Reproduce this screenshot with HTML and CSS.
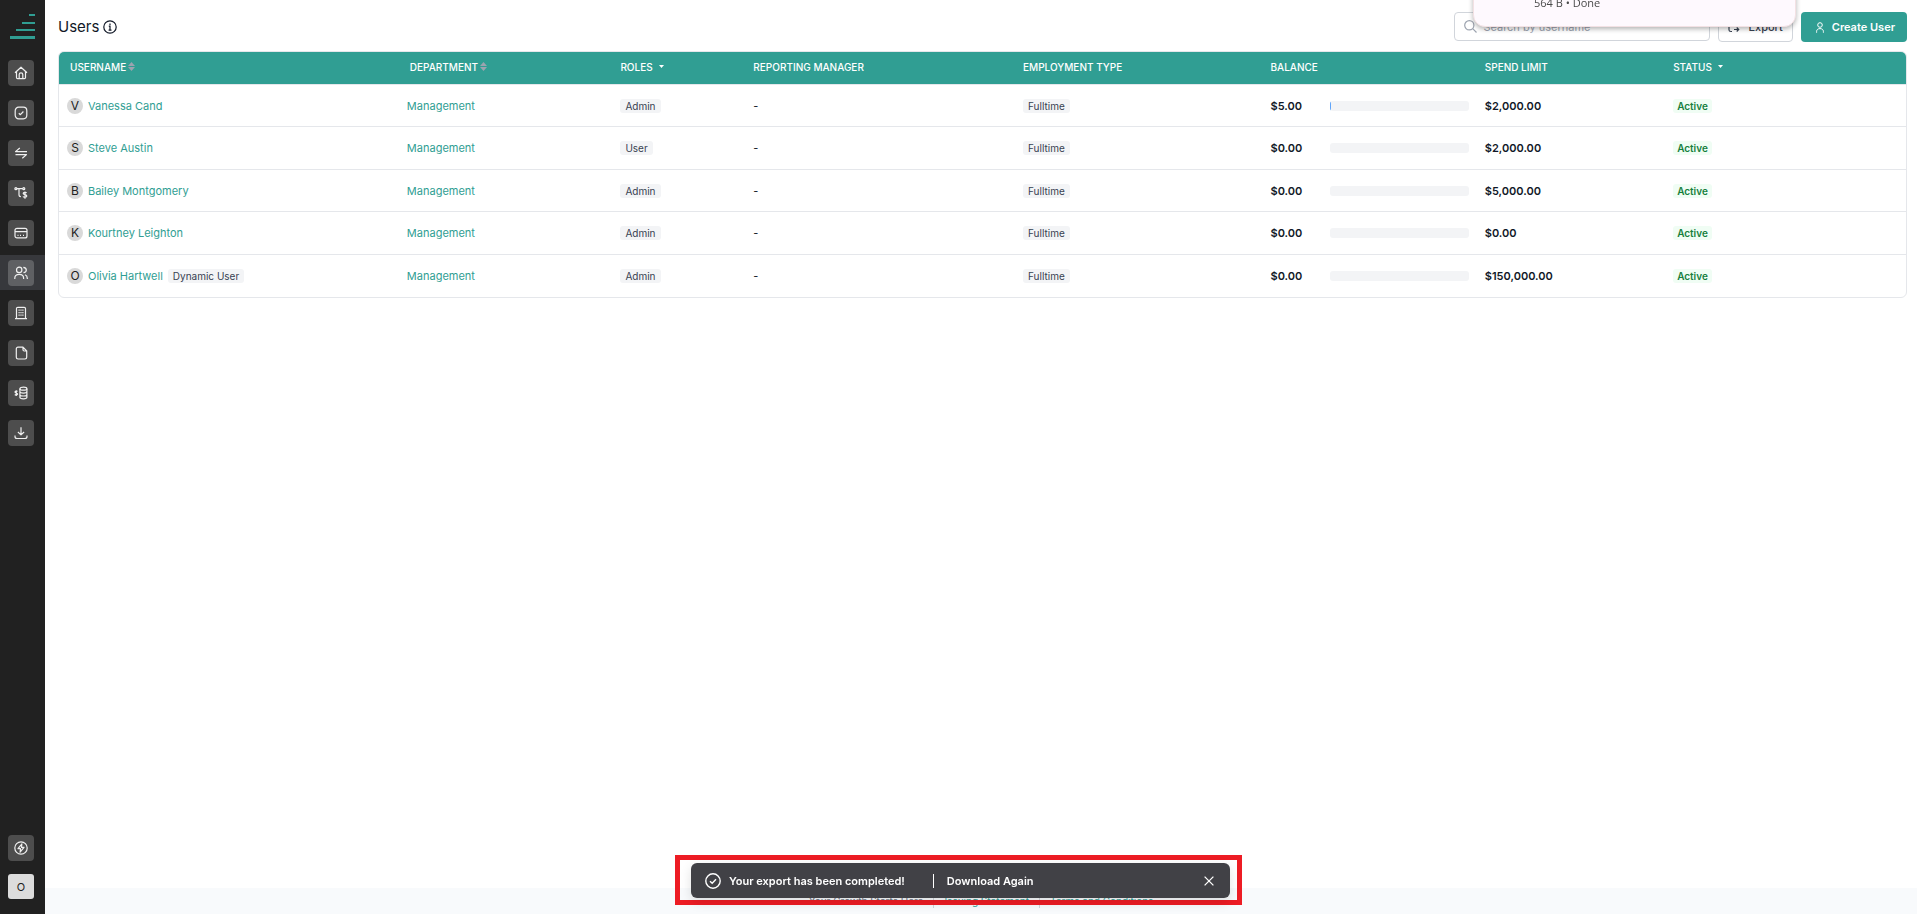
FILE: index.html
```html
<!DOCTYPE html>
<html lang="en">
<head>
<meta charset="utf-8">
<title>Users</title>
<meta name="viewport" content="width=device-width, initial-scale=1">
<link rel="stylesheet" href="styles.css">
</head>
<body>
<div class="app">
  <aside class="sidebar">
    <a class="logo" href="#" aria-label="Home page">
      <svg width="25" height="25" viewBox="0 0 25 25" fill="#309e93"><path d="M19 0h6v2h-6zM12 8h13v2H12zM6 15h19v2H6zM0 22h25v3H0z"/></svg>
    </a>
    <nav class="nav" aria-label="Main">
      <a class="nav-item" href="#" aria-label="Dashboard"><span class="tile"><svg viewBox="0 0 14 14"><path d="M1 6.8 7 1.2l6 5.6M2.5 5.6v5.9c0 .7.4 1.1 1.1 1.1h6.8c.7 0 1.1-.4 1.1-1.1V5.6M5.2 12.5V8.6C5.2 7.4 6 6.900 7 6.900s1.800.5 1.800 1.700v3.900"/></svg></span></a>
      <a class="nav-item" href="#" aria-label="Approvals"><span class="tile"><svg viewBox="0 0 14 14"><rect x="1.200" y="1.200" width="11.600" height="11.600" rx="3.500"/><path d="m4.800 7.200 1.600 1.500 3-3.200"/></svg></span></a>
      <a class="nav-item" href="#" aria-label="Transactions"><span class="tile"><svg viewBox="0 0 14 14"><path d="M13 5.600H1.500L5.800 2M1.500 8.600h11L8.300 12.200"/></svg></span></a>
      <a class="nav-item" href="#" aria-label="Workflows"><span class="tile"><svg viewBox="0 0 14 14"><circle cx="1.900" cy="2.700" r="1"/><circle cx="9.800" cy="2.700" r="1"/><path d="M3 2.700h5.800M5 2.900v5.900c0 1.200.5 1.900 1.900 1.900"/><path d="M12.600 6.900c-.6-.9-3.400-.9-3.400.5 0 1.700 3.600.9 3.600 2.700 0 1.500-3.200 1.500-3.800.4M11 5.400v7.400"/></svg></span></a>
      <a class="nav-item" href="#" aria-label="Cards"><span class="tile"><svg viewBox="0 0 14 14"><rect x="1" y="2.300" width="12" height="9.600" rx="2"/><path d="M1 5.700h12M3.500 9.300h1M6 9.300h1M9 9.300h1"/></svg></span></a>
      <a class="nav-item nav-item--active" href="#" aria-label="Users" aria-current="page"><span class="tile"><svg viewBox="0 0 14 14"><circle cx="5.200" cy="3.900" r="2.700"/><path d="M.8 13v-.8c0-2.500 1.700-3.900 4.400-3.900s4.400 1.400 4.400 3.900v.8M9.300 1.300c2.200.2 3 1.500 3 2.700S11.200 6.500 9.500 6.600M11 8.800c1.600.6 2.300 1.700 2.300 3.400v.8"/></svg></span></a>
      <a class="nav-item" href="#" aria-label="Company"><span class="tile"><svg viewBox="0 0 14 14"><path d="M1 12.700h12M2.500 12.700V2.600c0-.8.5-1.300 1.300-1.300h6.400c.8 0 1.300.5 1.300 1.300v10.100"/><path d="M4.500 4.200h1.200M6.400 4.200h1.200M8.300 4.200h1.200M4.500 6.700h1.200M6.400 6.700h1.200M8.300 6.700h1.200M4.500 9.200h1.200M6.400 9.200h1.200M8.300 9.200h1.200"/></svg></span></a>
      <a class="nav-item" href="#" aria-label="Documents"><span class="tile"><svg viewBox="0 0 14 14"><path d="M9 1.200H4C3 1.200 2.300 1.900 2.300 2.900v8.400c0 1 .7 1.700 1.700 1.700h7c1 0 1.700-.7 1.700-1.700V5L9 1.200v2.600C9 4.600 9.400 5 10.200 5h2.500"/></svg></span></a>
      <a class="nav-item" href="#" aria-label="Reimbursements"><span class="tile"><svg viewBox="0 0 14 14"><ellipse cx="9.400" cy="2.700" rx="3.500" ry="1.500"/><path d="M5.900 2.700v8.600c0 .8 1.600 1.500 3.500 1.500s3.500-.7 3.500-1.500V2.700M5.900 5.600c0 .8 1.600 1.500 3.500 1.500s3.500-.7 3.500-1.500M5.900 8.500c0 .8 1.600 1.500 3.500 1.500s3.500-.7 3.500-1.500M3.600 5.400C3 4.800 1 4.900 1 6c0 1.300 2.600.7 2.600 2C3.600 9.100 1.500 9.200.8 8.500M2.300 4.200v5.700"/></svg></span></a>
      <a class="nav-item" href="#" aria-label="Downloads"><span class="tile"><svg viewBox="0 0 14 14"><path d="M7 1.200v7.600M3.900 6 7 8.900 10.100 6M1 9.500v1c0 1.300.8 2 2 2h8c1.200 0 2-.7 2-2v-1"/></svg></span></a>
    </nav>
    <div class="sidebar-bottom">
      <button class="tile" type="button" aria-label="Quick actions"><svg viewBox="0 0 14 14"><circle cx="7" cy="7" r="6.200"/><path d="M7.900 2.800 4 7.700h2.500l-.4 3.500L10 6.300H7.500z"/></svg></button>
      <button class="account" type="button" aria-label="Account">O</button>
    </div>
  </aside>

  <div class="page">
    <main class="main">
      <header class="toolbar">
        <h1 class="title">Users
          <svg width="14" height="14" viewBox="0 0 14 14" fill="none" stroke="#111827" stroke-width="1.200"><circle cx="7" cy="7" r="6.200"/><path d="M5.800 6.200H7v3.900M5.600 10.200h2.900M7 3.600v1.300"/></svg>
        </h1>
        <div class="actions">
          <label class="search">
            <svg width="13" height="13" viewBox="0 0 13 13" fill="none" stroke="#9ca3af" stroke-width="1.200"><circle cx="5.300" cy="5.300" r="4.600"/><path d="m8.700 8.700 3.800 3.800"/></svg>
            <input type="search" placeholder="Search by username" aria-label="Search by username">
          </label>
          <button class="btn btn--outline" type="button">
            <svg width="12" height="12" viewBox="0 0 12 12" fill="none" stroke="currentColor" stroke-width="1.200"><path d="M5 1H3Q1 1 1 3v6q0 1.500 2 1.500h1M9 1q2 0 2 2v2M6 8.500h4.500M8.700 6.500l2 2-2 2"/></svg>
            Export
          </button>
          <button class="btn btn--primary" type="button">
            <svg width="8" height="11" viewBox="0 0 8 11" fill="none" stroke="currentColor"><circle cx="4" cy="3" r="2.300"/><path d="M.6 10.700V9.500C.6 7.600 2 6.600 4 6.600s3.400 1 3.400 2.900v1.200"/></svg>
            Create User
          </button>
        </div>
      </header>

      <div class="table-card">
        <table class="users">
          <colgroup><col class="c-name"><col class="c-dept"><col class="c-role"><col class="c-manager"><col class="c-type"><col class="c-balance"><col class="c-limit"><col class="c-status"></colgroup>
          <thead>
            <tr>
              <th scope="col"><span class="head">Username<svg class="sort" viewBox="0 0 7 9"><path d="M3.500 0 7 4H0zM0 5h7L3.500 9z"/></svg></span></th>
              <th scope="col"><span class="head">Department<svg class="sort" viewBox="0 0 7 9"><path d="M3.500 0 7 4H0zM0 5h7L3.500 9z"/></svg></span></th>
              <th scope="col"><span class="head">Roles<svg class="caret" viewBox="0 0 5 3"><path d="M0 0h5L2.500 3z"/></svg></span></th>
              <th scope="col">Reporting Manager</th>
              <th scope="col">Employment Type</th>
              <th scope="col">Balance</th>
              <th scope="col">Spend Limit</th>
              <th scope="col"><span class="head">Status<svg class="caret" viewBox="0 0 5 3"><path d="M0 0h5L2.500 3z"/></svg></span></th>
            </tr>
          </thead>
          <tbody>
            <tr>
              <td class="linked"><div class="person"><span class="avatar">V</span><a href="#">Vanessa Cand</a></div></td>
              <td class="linked"><a href="#">Management</a></td>
              <td><span class="tag">Admin</span></td><td>-</td><td><span class="tag">Fulltime</span></td>
              <td><div class="balance"><span class="amount">$5.00</span><span class="bar"><span class="fill" style="width:0.25%"></span></span></div></td>
              <td class="amount">$2,000.00</td><td><span class="tag tag--active">Active</span></td>
            </tr>
            <tr>
              <td class="linked"><div class="person"><span class="avatar">S</span><a href="#">Steve Austin</a></div></td>
              <td class="linked"><a href="#">Management</a></td>
              <td><span class="tag">User</span></td><td>-</td><td><span class="tag">Fulltime</span></td>
              <td><div class="balance"><span class="amount">$0.00</span><span class="bar"></span></div></td>
              <td class="amount">$2,000.00</td><td><span class="tag tag--active">Active</span></td>
            </tr>
            <tr>
              <td class="linked"><div class="person"><span class="avatar">B</span><a href="#">Bailey Montgomery</a></div></td>
              <td class="linked"><a href="#">Management</a></td>
              <td><span class="tag">Admin</span></td><td>-</td><td><span class="tag">Fulltime</span></td>
              <td><div class="balance"><span class="amount">$0.00</span><span class="bar"></span></div></td>
              <td class="amount">$5,000.00</td><td><span class="tag tag--active">Active</span></td>
            </tr>
            <tr>
              <td class="linked"><div class="person"><span class="avatar">K</span><a href="#">Kourtney Leighton</a></div></td>
              <td class="linked"><a href="#">Management</a></td>
              <td><span class="tag">Admin</span></td><td>-</td><td><span class="tag">Fulltime</span></td>
              <td><div class="balance"><span class="amount">$0.00</span><span class="bar"></span></div></td>
              <td class="amount">$0.00</td><td><span class="tag tag--active">Active</span></td>
            </tr>
            <tr>
              <td class="linked"><div class="person"><span class="avatar">O</span><a href="#">Olivia Hartwell</a><span class="tag">Dynamic User</span></div></td>
              <td class="linked"><a href="#">Management</a></td>
              <td><span class="tag">Admin</span></td><td>-</td><td><span class="tag">Fulltime</span></td>
              <td><div class="balance"><span class="amount">$0.00</span><span class="bar"></span></div></td>
              <td class="amount">$150,000.00</td><td><span class="tag tag--active">Active</span></td>
            </tr>
          </tbody>
        </table>
      </div>
    </main>

    <footer class="footer">
      <span>Your Growth Starts Here</span>
      <a href="#">Issuing Statement</a>
      <a href="#">Terms and Conditions</a>
    </footer>
  </div>
</div>

<div class="download-popup">564 B • Done</div>

<div class="toast-frame">
  <div class="toast" role="status">
    <svg width="16" height="16" viewBox="0 0 16 16" fill="none" stroke="#fff" stroke-width="1.400"><circle cx="8" cy="8" r="7.200"/><path d="m5 8.200 2.200 2.100L11 6.200"/></svg>
    <span class="toast-text">Your export has been completed!</span>
    <button class="toast-action" type="button">Download Again</button>
    <button class="toast-close" type="button" aria-label="Close"><svg width="10" height="10" viewBox="0 0 10 10" stroke="#fff" stroke-width="1.300"><path d="m.6.6 8.800 8.800M9.400.6.600 9.400"/></svg></button>
  </div>
</div>
</body>
</html>
```
FILE: styles.css
```css
* { box-sizing: border-box; }

body {
  margin: 0;
  background: #fff;
  color: #111827;
  font-family: Inter, "Liberation Sans", sans-serif;
  font-size: 11px;
  line-height: 16px;
}

a { color: #309e93; text-decoration: none; }

button, input { font: inherit; color: inherit; }

button { border: 0; cursor: pointer; }

svg { flex: none; }

.app { display: flex; min-height: 100vh; }

/* Sidebar */
.sidebar {
  display: flex;
  flex: none;
  flex-direction: column;
  width: 45px;
  background: #212121;
}

.logo { display: block; height: 55px; padding: 14px 0 0 10px; }

.nav { display: flex; flex-direction: column; gap: 5px; }

.nav-item { display: flex; align-items: center; height: 35px; padding-left: 8px; }

.nav-item--active { background: #37383c; }

.tile {
  display: flex;
  align-items: center;
  justify-content: center;
  width: 26px;
  height: 26px;
  padding: 0;
  border-radius: 4px;
  background: #4d4d4d;
}

.nav-item--active .tile { background: #5f6063; }

.tile svg {
  width: 14px;
  height: 14px;
  fill: none;
  stroke: #f0f0f0;
  stroke-linejoin: round;
  stroke-width: 1.2;
}

.sidebar-bottom {
  display: flex;
  flex-direction: column;
  gap: 13px;
  margin-top: auto;
  padding: 0 0 15px 8px;
}

.account {
  width: 26px;
  height: 25px;
  padding: 0;
  border-radius: 3px;
  background: #dcdcdc;
  color: #212121;
}

/* Page */
.page { display: flex; flex: 1; flex-direction: column; min-width: 0; }

.main { flex: 1; padding: 12px 10px 16px 13px; }

.toolbar {
  display: flex;
  align-items: center;
  justify-content: space-between;
  height: 30px;
  margin-bottom: 9px;
}

.title {
  display: flex;
  align-items: center;
  gap: 4px;
  margin: 0;
  font-size: 15px;
  font-weight: 400;
}

.actions { display: flex; gap: 8px; }

.search {
  display: flex;
  align-items: center;
  gap: 6px;
  width: 256px;
  height: 29px;
  padding: 0 9px;
  border: 1px solid #d1d5db;
  border-radius: 4px;
}

.search input { flex: 1; min-width: 0; padding: 0; border: 0; outline: 0; background: none; }

.search input::placeholder { color: #9ca3af; opacity: 1; }

.btn {
  display: flex;
  align-items: center;
  gap: 8px;
  height: 30px;
  border-radius: 4px;
  font-weight: 600;
}

.btn--outline { padding: 0 9px; border: 1px solid #d1d5db; background: #fff; color: #374151; font-weight: 500; }

.btn--primary { padding: 0 12px 0 15px; background: #309e93; color: #fff; }

/* Users table */
.table-card { overflow: hidden; border: 1px solid #e5e7eb; border-radius: 6px; }

.users { width: 100%; border-collapse: separate; border-spacing: 0; table-layout: fixed; }

.c-name { width: 18.4%; }
.c-dept { width: 11.4%; }
.c-role { width: 7.2%; }
.c-manager { width: 14.6%; }
.c-type { width: 13.4%; }
.c-balance { width: 11.6%; }
.c-limit { width: 10.2%; }

.users th {
  height: 33px;
  padding: 0 11px 3px;
  border-bottom: 1px solid #e5e7eb;
  background: #309e93;
  color: #fff;
  font-size: 10px;
  font-weight: 500;
  text-align: left;
  text-transform: uppercase;
  white-space: nowrap;
}

.head { display: flex; align-items: center; }

.sort { width: 7px; height: 9px; margin-left: 2px; fill: #9ca3af; }

.caret { width: 5px; height: 3px; margin-left: 6px; fill: #fff; }

.users td { height: 42px; padding: 0 11px; border-bottom: 1px solid #e5e7eb; }

.users tr:nth-child(even) td { height: 43px; }

.users tbody tr:last-child td { border-bottom: 0; }

.users .linked { padding-left: 8px; }

.person { display: flex; align-items: center; gap: 5px; }

.avatar {
  display: flex;
  align-items: center;
  justify-content: center;
  width: 16px;
  height: 16px;
  border-radius: 8px;
  background: #d9d9d9;
  color: #212121;
  font-size: 12px;
}

.tag {
  display: inline-block;
  padding: 0 5px;
  border-radius: 3px;
  background: #f3f4f6;
  color: #374151;
  font-size: 10px;
  line-height: 14px;
}

.tag--active { padding: 0 4px; background: #f0fdf4; color: #15803d; font-weight: 600; }

.users .amount { font-weight: 600; }

.balance { display: flex; align-items: center; justify-content: space-between; margin-right: -6px; }

.bar { width: 70%; height: 10px; overflow: hidden; border-radius: 3px; background: #f3f4f6; }

.fill { display: block; min-width: 1px; height: 100%; background: #60a5fa; }

/* Footer */
.footer {
  display: flex;
  align-items: center;
  justify-content: center;
  height: 26px;
  background: #f8fafc;
  color: #6b7280;
  font-size: 10px;
  line-height: 14px;
}

.footer a { margin-left: 10px; padding-left: 10px; border-left: 1px solid #d1d5db; }

/* Browser download bubble */
.download-popup {
  position: fixed;
  top: -50px;
  right: 121px;
  width: 323px;
  height: 77px;
  padding: 44px 60px 0;
  border: 1px solid #f3e1e4;
  border-radius: 12px;
  background: #fef9fe;
  box-shadow: 0 2px 5px rgba(0, 0, 0, 0.3);
  color: #4b4b4b;
  font-family: "Open Sans", sans-serif;
}

/* Export toast */
.toast-frame {
  position: fixed;
  right: 0;
  bottom: 9px;
  left: 0;
  width: 567px;
  max-width: 100%;
  margin: 0 auto;
  padding: 3px 7px 2px 11px;
  border: 5px solid #ed1c24;
}

.toast {
  display: flex;
  align-items: center;
  height: 35px;
  padding: 0 16px 0 14px;
  border-radius: 6px;
  background: #414146;
  box-shadow: 0 4px 12px rgba(0, 0, 0, 0.12);
  color: #fff;
  font-weight: 600;
}

.toast-text { margin-left: 8px; }

.toast-action {
  margin-left: 28px;
  padding: 0 0 0 13px;
  border-left: 1px solid #fff;
  background: none;
  line-height: 14px;
}

.toast-close { display: flex; margin-left: auto; padding: 0; background: none; }
```
